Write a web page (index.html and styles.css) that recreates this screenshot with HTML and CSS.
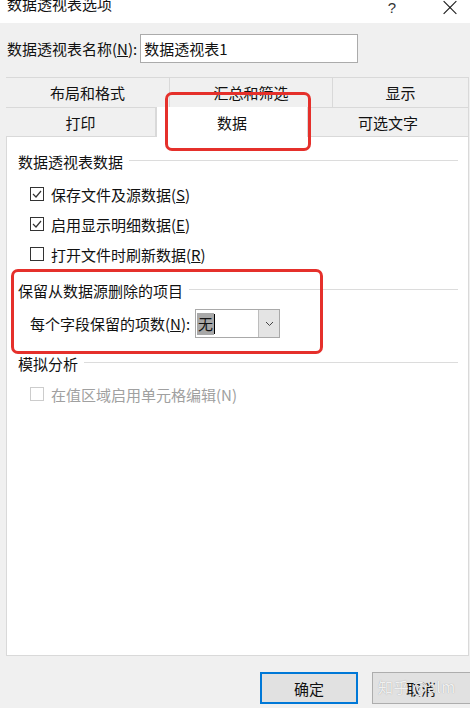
FILE: index.html
```html
<!DOCTYPE html>
<html>
<head>
  <title>数据透视表选项</title>
  <link rel="stylesheet" href="styles.css">
</head>
<body>
  <div class="dialog">
    <div class="titlebar">
      <span class="title">数据透视表选项</span>
      <span class="help">?</span>
      <span class="close"></span>
    </div>

    <div class="name-row">
      <span class="label">数据透视表名称(<u>N</u>):</span>
      <div class="textbox">数据透视表1</div>
    </div>

    <!-- tab headers, two rows -->
    <div class="tabs">
      <div class="tab-row">
        <div class="tab w1">布局和格式</div>
        <div class="tab w2">汇总和筛选</div>
        <div class="tab w3">显示</div>
      </div>
      <div class="tab-row lower">
        <div class="tab w4">打印</div>
        <div class="tab w5 selected">数据</div>
        <div class="tab w6 last">可选文字</div>
      </div>
    </div>

    <div class="panel">
      <div class="group-title first"><span>数据透视表数据</span><i class="rule"></i></div>
      <div class="check-row">
        <span class="box"><svg width="12" height="12" viewBox="0 0 12 12"><path d="M2 6 L5 9 L10 3" stroke="#333" stroke-width="1.2" fill="none"/></svg></span>
        <span>保存文件及源数据(<u>S</u>)</span>
      </div>
      <div class="check-row">
        <span class="box"><svg width="12" height="12" viewBox="0 0 12 12"><path d="M2 6 L5 9 L10 3" stroke="#333" stroke-width="1.2" fill="none"/></svg></span>
        <span>启用显示明细数据(<u>E</u>)</span>
      </div>
      <div class="check-row">
        <span class="box"></span>
        <span>打开文件时刷新数据(<u>R</u>)</span>
      </div>

      <div class="group-title second"><span>保留从数据源删除的项目</span><i class="rule"></i></div>
      <div class="field-row">
        <span class="field-label">每个字段保留的项数(<u>N</u>):</span>
        <div class="combo">
          <div class="combo-value"><span class="sel">无</span><i class="caret"></i></div>
          <div class="combo-btn">
            <svg width="9" height="6" viewBox="0 0 9 6"><path d="M1 1 L4.5 4.5 L8 1" stroke="#444" stroke-width="1" fill="none"/></svg>
          </div>
        </div>
      </div>

      <div class="group-title third"><span>模拟分析</span><i class="rule"></i></div>
      <div class="check-row disabled">
        <span class="box"></span>
        <span>在值区域启用单元格编辑(N)</span>
      </div>
    </div>

    <div class="footer">
      <button class="btn default">确定</button>
      <button class="btn cancel">取消</button>
      <span class="watermark">知乎 @alm</span>
    </div>

    <!-- red annotation frames -->
    <div class="mark mark-tab"></div>
    <div class="mark mark-group"></div>
  </div>
</body>
</html>
```

FILE: styles.css
```css
* {
  box-sizing: border-box;
}

html, body {
  margin: 0;
  width: 470px;
  height: 708px;
  overflow: hidden;
}

body {
  background-color: #f0f0f0;
  font-family: "Noto Sans CJK SC", "Noto Sans", sans-serif;
  font-size: 15px;
  color: #111;
}

.dialog {
  position: relative;
  width: 470px;
  height: 708px;
  display: flex;
  flex-direction: column;
  overflow: hidden;
}

/* title bar */
.titlebar {
  height: 23px;
  background-color: #ffffff;
  display: grid;
  grid-template-columns: 1fr 12px 14px;
  column-gap: 45px;
  padding: 0 13px 0 7px;
  align-items: start;
  overflow: hidden;
}

.title {
  margin-top: -6px;
  line-height: 20px;
}

.help {
  text-align: center;
  line-height: 16px;
  font-family: "Liberation Sans", sans-serif;
  font-size: 15px;
  color: #333;
}

/* close cross drawn with two thin bars */
.close {
  position: relative;
  width: 14px;
  height: 14px;
  margin-top: 1px;
}

.close::before,
.close::after {
  content: "";
  position: absolute;
  left: -2px;
  top: 6px;
  width: 18px;
  height: 1px;
  background-color: #111;
  transform: rotate(45deg);
}

.close::after {
  transform: rotate(-45deg);
}

/* name row */
.name-row {
  display: flex;
  align-items: center;
  margin-top: 11px;
  padding-left: 7px;
  gap: 3px;
}

.textbox {
  width: 218px;
  height: 29px;
  background-color: #ffffff;
  border: 1px solid #ababab;
  padding-left: 3px;
  line-height: 27px;
}

/* tabs */
.tabs {
  margin-top: 14px;
  margin-left: 6px;
  width: 463px;
}

.tab-row {
  display: flex;
  height: 30px;
  border-top: 1px solid #d9d9d9;
}

.tab {
  display: flex;
  align-items: center;
  justify-content: center;
  border-right: 1px solid #d9d9d9;
  height: 100%;
}

.tab-row.lower .tab {
  border-bottom: 1px solid #d9d9d9;
}

.tab-row.lower .tab.selected {
  background-color: #ffffff;
  border-bottom: none;
  border-left: 1px solid #d9d9d9;
  margin-top: -1px;
  height: 31px;
}

.w1 { width: 164px; }
.w2 { width: 163px; }
.w3 { width: 136px; }
.w4 { width: 150px; }
.w5 { width: 152px; }
.w6 { width: 161px; }

/* panel */
.panel {
  margin-left: 6px;
  width: 463px;
  height: 519px;
  background-color: #ffffff;
  border: 1px solid #d9d9d9;
  border-top: none;
  padding: 0 10px 0 11px;
}

.group-title {
  display: flex;
  align-items: center;
  height: 20px;
  gap: 6px;
}

.group-title .rule {
  flex: 1;
  border-top: 1px solid #dcdcdc;
  margin-top: -2px;
}

.group-title.first { margin-top: 14px; margin-bottom: 8px; }
.group-title.second { margin-top: 11px; margin-bottom: 9px; }
.group-title.third { margin-top: 15px; margin-bottom: 6px; }

.check-row {
  display: flex;
  align-items: center;
  height: 30px;
  padding-left: 12px;
  gap: 7px;
}

.box {
  width: 14px;
  height: 14px;
  border: 1px solid #333;
  background-color: #ffffff;
  display: flex;
  align-items: center;
  justify-content: center;
}

.check-row.disabled {
  color: #a0a0a0;
}

.check-row.disabled .box {
  border-color: #cccccc;
}

.field-row {
  display: flex;
  align-items: center;
  padding-left: 12px;
  height: 29px;
}

.field-label {
  width: 165px;
}

.combo {
  display: flex;
  width: 85px;
  height: 29px;
  border: 1px solid #a9a9a9;
}

.combo-value {
  flex: 1;
  display: flex;
  align-items: center;
  padding-left: 1px;
}

.sel {
  background-color: #a8a8a8;
  line-height: 22px;
  padding: 0 1px;
}

.caret {
  width: 1px;
  height: 20px;
  background-color: #000;
}

.combo-btn {
  width: 21px;
  background-color: #e4e4e4;
  border-left: 1px solid #bdbdbd;
  display: flex;
  align-items: center;
  justify-content: center;
}

/* footer buttons */
.footer {
  display: flex;
  justify-content: flex-end;
  gap: 14px;
  padding-top: 16px;
  position: relative;
}

.btn {
  flex-shrink: 0;
  width: 98px;
  height: 32px;
  background-color: #e1e1e1;
  border: 1px solid #adadad;
  font-family: "Noto Sans CJK SC", sans-serif;
  font-size: 15px;
  color: #111;
  padding: 0;
}

.btn.default {
  border: 2px solid #0078d7;
}

/* cancel button runs off the right edge of the shot */
.btn.cancel {
  width: 100px;
  margin-right: -2px;
  padding-right: 2px;
}

.watermark {
  position: absolute;
  left: 378px;
  top: 20px;
  font-size: 15px;
  color: rgba(255, 255, 255, 0.85);
  text-shadow: 0 0 1px #9a9a9a;
  letter-spacing: 0.5px;
  white-space: nowrap;
}

/* annotation frames */
.mark {
  position: absolute;
  border: 3px solid #e5302b;
  border-radius: 7px;
}

.mark-tab {
  left: 165px;
  top: 92px;
  width: 146px;
  height: 59px;
}

.mark-group {
  left: 11px;
  top: 269px;
  width: 312px;
  height: 85px;
}
```
